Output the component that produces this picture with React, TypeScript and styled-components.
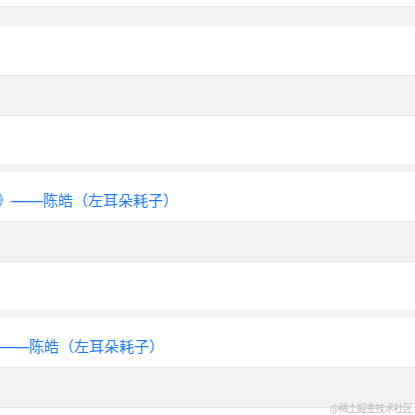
import React from "react";
import styled, { createGlobalStyle } from "styled-components";

const Global = createGlobalStyle`
  html, body { margin: 0; padding: 0; background: #ffffff; overflow: hidden; }
  body { font-family: "Noto Sans CJK SC", "Noto Sans", sans-serif; }
`;

const Page = styled.div`
  position: relative;
  width: 415px;
  height: 415px;
  overflow: hidden;
  display: flex;
  flex-direction: column;
  background: #ffffff;
`;

const Head = styled.div`
  flex: none;
  margin-top: 6px;
  height: 19px;
  border-top: 1px solid #e4e6eb;
  background: #f2f3f5;
`;

const Section = styled.section`
  flex: none;
  display: flex;
  flex-direction: column;
  background: #ffffff;
`;

const QuoteRow = styled.div`
  height: 39px;
  display: flex;
  align-items: flex-end;
  padding-bottom: 10px;
  border-bottom: 1px solid #e4e6eb;
  overflow: hidden;
`;

const Quote = styled.p<{ $shift: number }>`
  margin: 0 0 0 ${(p) => p.$shift}px;
  white-space: nowrap;
  font-family: "Noto Sans CJK SC", "Noto Sans", sans-serif;
  font-size: 15px;
  line-height: 20px;
  color: #1e80ff;
`;

const Dash = styled.span<{ $gap: number }>`
  margin-left: ${(p) => p.$gap}px;
  font-family: "Liberation Sans", sans-serif;
  font-size: 16px;
`;

const ShadeRow = styled.div`
  height: 39px;
  background: #f2f3f5;
  border-bottom: 1px solid #e4e6eb;
`;

const PlainRow = styled.div`
  height: 48px;
  background: #ffffff;
`;

const Gap = styled.div`
  flex: none;
  height: 8px;
  background: #f2f3f5;
`;

const Watermark = styled.span`
  position: absolute;
  right: 3px;
  bottom: 1px;
  font-family: "Noto Sans CJK SC", sans-serif;
  font-size: 10px;
  line-height: 12px;
  color: #b9bdc4;
  letter-spacing: -0.8px;
`;

type Q = { lead: string; gap: number; shift: number } | null;

const quotes: Q[] = [
  null,
  { lead: "》", gap: 0, shift: -4 },
  { lead: "", gap: 0, shift: -3 },
];

export default function App() {
  return (
    <>
      <Global />
      <Page>
        <Head />
        {quotes.map((q, i) => (
          <React.Fragment key={i}>
            {i > 0 && <Gap />}
            <Section>
              <QuoteRow>
                {q && (
                  <Quote $shift={q.shift}>
                    {q.lead}
                    <Dash $gap={q.gap}>——</Dash>陈皓（左耳朵耗子）
                  </Quote>
                )}
              </QuoteRow>
              <ShadeRow />
              <PlainRow />
            </Section>
          </React.Fragment>
        ))}
        <Watermark>@稀土掘金技术社区</Watermark>
      </Page>
    </>
  );
}
